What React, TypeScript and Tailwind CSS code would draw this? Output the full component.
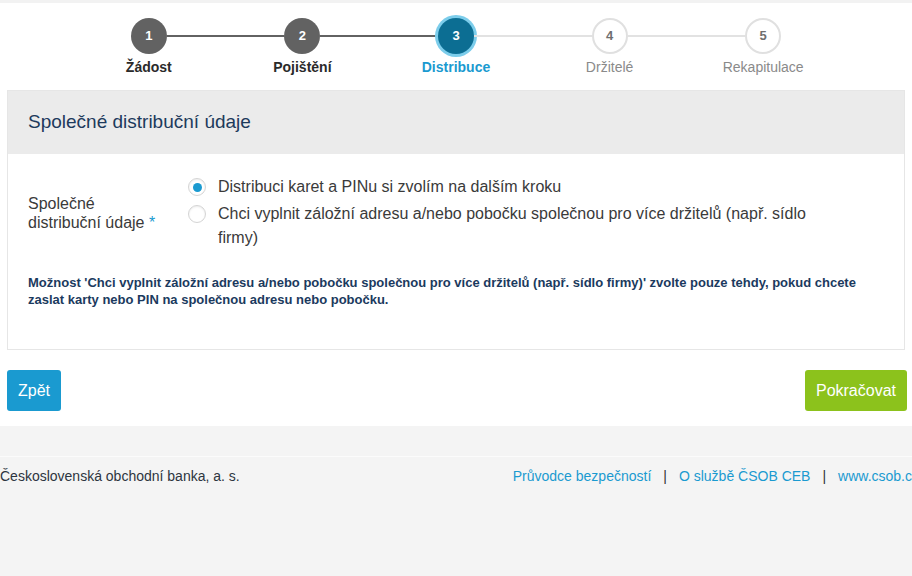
import React from 'react';

type StepState = 'done' | 'active' | 'todo';

interface Step {
  num: number;
  label: string;
  state: StepState;
}

const steps: Step[] = [
  { num: 1, label: 'Žádost', state: 'done' },
  { num: 2, label: 'Pojištění', state: 'done' },
  { num: 3, label: 'Distribuce', state: 'active' },
  { num: 4, label: 'Držitelé', state: 'todo' },
  { num: 5, label: 'Rekapitulace', state: 'todo' },
];

// segment i connects step i and i+1
const segmentDark = [true, true, false, false];

function Stepper() {
  return (
    <div className="mx-auto grid w-[768px] grid-cols-5 pt-[15px] pb-[15px]">
      {steps.map((s, i) => {
        const left =
          i === 0 ? 'bg-transparent' : segmentDark[i - 1] ? 'bg-[#626262]' : 'bg-[#e2e2e2]';
        const right =
          i === steps.length - 1
            ? 'bg-transparent'
            : segmentDark[i]
              ? 'bg-[#626262]'
              : 'bg-[#e2e2e2]';
        let circle = 'bg-[#626262] text-white';
        if (s.state === 'active') circle = 'bg-[#0c6e93] text-white ring-[3px] ring-[#7ccdeb]';
        if (s.state === 'todo') circle = 'bg-white text-[#6f6f6f] border-2 border-[#e0e0e0]';
        let label = 'font-bold text-[#2a2a2a]';
        if (s.state === 'active') label = 'font-bold text-[#1a9ad0]';
        if (s.state === 'todo') label = 'text-[#8a8a8a]';
        return (
          <div key={s.num} className="flex flex-col items-center">
            <div className="flex w-full items-center">
              <div className={`h-[2px] flex-1 ${left}`} />
              <div
                className={`flex h-[36px] w-[36px] items-center justify-center rounded-full text-[13px] font-bold ${circle}`}
              >
                {s.num}
              </div>
              <div className={`h-[2px] flex-1 ${right}`} />
            </div>
            <div className={`mt-[5px] text-[14px] leading-[16px] ${label}`}>{s.label}</div>
          </div>
        );
      })}
    </div>
  );
}

function Radio({ checked }: { checked?: boolean }) {
  return (
    <span className="mt-[3px] flex h-[18px] w-[18px] shrink-0 items-center justify-center rounded-full border border-[#d4d4d4] bg-white shadow-[inset_0_1px_2px_rgba(0,0,0,0.08)]">
      {checked && <span className="h-[9px] w-[9px] rounded-full bg-[#1a9ad0]" />}
    </span>
  );
}

export default function App() {
  return (
    <div
      className="min-h-[576px] overflow-hidden bg-[#f4f4f4]"
      style={{ fontFamily: '"Liberation Sans", Arial, sans-serif' }}
    >
      <div className="h-[3px] bg-[#f2f2f2]" />
      <div className="bg-white">
        <Stepper />

        <div className="mx-[7px] border border-[#e6e6e6]">
          <div className="flex h-[63px] items-center bg-[#ebebeb] px-[20px]">
            <h1 className="text-[19px] text-[#1d3a5c]">Společné distribuční údaje</h1>
          </div>
          <div className="px-[20px] pt-[21px] pb-[41px]">
            <div className="flex items-center">
              <div className="w-[160px] shrink-0 text-[16px] leading-[19px] text-[#3a3a3a]">
                <span className="block">Společné</span>
                <span className="block whitespace-nowrap">
                  distribuční údaje <span className="text-[#1a9ad0]">*</span>
                </span>
              </div>
              <div className="flex w-[640px] flex-col gap-[3px]">
                <label className="flex items-start gap-[12px]">
                  <Radio checked />
                  <span className="text-[16px] leading-[24px] text-[#3a3a3a]">
                    Distribuci karet a PINu si zvolím na dalším kroku
                  </span>
                </label>
                <label className="flex items-start gap-[12px]">
                  <Radio />
                  <span className="text-[16px] leading-[24px] text-[#3a3a3a]">
                    Chci vyplnit záložní adresu a/nebo pobočku společnou pro více držitelů (např.
                    sídlo firmy)
                  </span>
                </label>
              </div>
            </div>
            <p className="mt-[24px] text-[13px] font-bold leading-[17px] text-[#1b3a5e]">
              Možnost 'Chci vyplnit záložní adresu a/nebo pobočku společnou pro více držitelů
              (např. sídlo firmy)' zvolte pouze tehdy, pokud chcete zaslat karty nebo PIN na
              společnou adresu nebo pobočku.
            </p>
          </div>
        </div>

        <div className="flex items-center justify-between pt-[20px] pr-[5px] pb-[15px] pl-[7px]">
          <button className="h-[41px] w-[54px] rounded-[3px] bg-[#1a9ad0] text-[16px] text-white">
            Zpět
          </button>
          <button className="h-[41px] w-[102px] rounded-[3px] bg-[#8cc21c] text-[16px] text-white">
            Pokračovat
          </button>
        </div>
      </div>

      <footer>
        <div className="h-[30px]" />
        <div className="h-[1px] bg-[#fbfbfb]" />
        <div className="flex w-[919px] items-center justify-between pt-[11px] text-[14px] leading-[16px] whitespace-nowrap">
          <span className="text-[#2d3540]">Československá obchodní banka, a. s.</span>
          <div className="flex items-center gap-[12px] text-[#1a9ad0]">
            <a>Průvodce bezpečností</a>
            <span className="text-[#333]">|</span>
            <a>O službě ČSOB CEB</a>
            <span className="text-[#333]">|</span>
            <a>www.csob.cz</a>
          </div>
        </div>
      </footer>
    </div>
  );
}
